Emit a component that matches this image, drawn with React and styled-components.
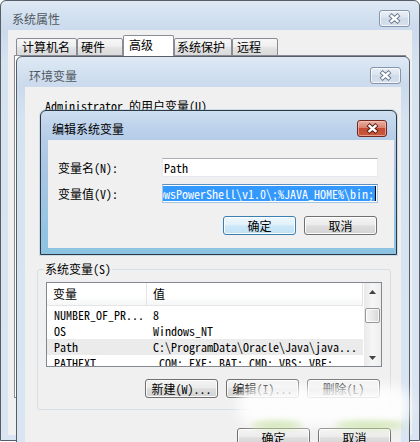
import React from 'react';
import styled, { createGlobalStyle } from 'styled-components';

const CJK = `"Noto Sans CJK SC", "Noto Sans", sans-serif`;
const MONO = `"Noto Sans Mono CJK SC", "Liberation Mono", "Noto Sans CJK SC", monospace`;

const GlobalStyle = createGlobalStyle`
  html, body { margin: 0; padding: 0; width: 420px; height: 442px; overflow: hidden; background: #fff; }
  body { font-family: ${CJK}; font-size: 12px; color: #000; }
  *, *::before, *::after { box-sizing: border-box; }
`;

const Desktop = styled.div`
  position: relative;
  width: 420px;
  height: 442px;
  overflow: hidden;
`;

/* ---------- generic window chrome ---------- */
const Frame = styled.div`
  display: flex;
  flex-direction: column;
  border: 1px solid ${p => (p.$active ? '#30363c' : '#565d66')};
  border-radius: 6px 6px 0 0;
  background: ${p =>
    p.$active
      ? 'linear-gradient(#cddff1 0px, #bfd4ec 14px, #b5cce7 29px, #a9c6e4 60px, #8cc3e2 100%)'
      : 'linear-gradient(#dfe9f5 0px, #d3e1f0 14px, #cbdaec 29px, #d5e2f0 60px, #d9e5f2 100%)'};
`;

const TitleBar = styled.div`
  display: flex;
  align-items: flex-start;
  justify-content: space-between;
  height: ${p => p.$h}px;
  flex: none;
`;

const Title = styled.div`
  padding-top: ${p => p.$top}px;
  padding-left: ${p => p.$left}px;
  font-family: ${CJK};
  font-size: 12px;
  line-height: 14px;
  color: ${p => (p.$active ? '#000' : '#505860')};
`;

const CloseButton = styled.div`
  display: flex;
  align-items: center;
  justify-content: center;
  width: ${p => p.$w || 31}px;
  height: 17px;
  margin-top: ${p => p.$top}px;
  margin-right: ${p => p.$right}px;
  border-radius: 3px;
  border: 1px solid ${p => (p.$active ? '#6e2a20' : '#8695a9')};
  background: ${p =>
    p.$active
      ? 'linear-gradient(#eab1a5 0%, #d9826f 45%, #c54a34 50%, #c65a3c 100%)'
      : 'linear-gradient(#e9eff7 0%, #dbe4ef 45%, #d0dbe8 50%, #d6e0ec 100%)'};
  box-shadow: inset 0 0 0 1px ${p => (p.$active ? 'rgba(255,200,190,0.6)' : 'rgba(255,255,255,0.7)')};
`;

const XIcon = ({ active }) => (
  <svg width="13" height="11" viewBox="0 0 13 11">
    <path
      d="M2 1.6 L11 9.4 M11 1.6 L2 9.4"
      stroke={active ? '#5b1d14' : '#6c7b90'}
      strokeWidth="4.4"
      fill="none"
    />
    <path d="M2.6 2.1 L10.4 8.9 M10.4 2.1 L2.6 8.9" stroke="#fff" strokeWidth="2.4" fill="none" />
  </svg>
);

/* ---------- outer window: 系统属性 ---------- */
const OuterWindow = styled(Frame)`
  width: 420px;
  height: 441px;
  padding: 0 7px 5px 7px;
`;

const OuterClient = styled.div`
  flex: 1;
  display: flex;
  flex-direction: column;
  background: #f0f0f0;
  padding: 6px 6px 0 6px;
`;

const TabStrip = styled.div`
  display: flex;
  align-items: flex-end;
  height: 20px;
  margin-left: 2px;
  position: relative;
  z-index: 1;
  margin-bottom: -1px;
`;

const Tab = styled.div`
  width: ${p => p.$w}px;
  height: ${p => (p.$selected ? 21 : 18)}px;
  padding-left: ${p => p.$pl}px;
  padding-top: ${p => (p.$selected ? 2 : 1)}px;
  border: 1px solid #898c95;
  border-bottom: ${p => (p.$selected ? 'none' : '1px solid #898c95')};
  border-radius: 2px 2px 0 0;
  background: ${p =>
    p.$selected ? '#fff' : 'linear-gradient(#f7f7f7 0%, #efefef 45%, #e3e3e3 55%, #dadada 100%)'};
  font-family: ${CJK};
  font-size: 12px;
  line-height: 14px;
  color: #000;
  white-space: nowrap;
`;

const TabPage = styled.div`
  height: 343px;
  border: 1px solid #898c95;
  background: #fff;
`;

/* ---------- env window: 环境变量 ---------- */
const EnvWindow = styled(Frame)`
  position: absolute;
  left: 16px;
  top: 56px;
  width: 394px;
  height: 420px;
  padding: 0 8px;
`;

const EnvClient = styled.div`
  flex: 1;
  display: flex;
  flex-direction: column;
  background: #f0f0f0;
  padding-top: 12px;
`;

const Label = styled.div`
  font-family: ${MONO};
  font-size: 12px;
  line-height: 14px;
  margin-left: ${p => p.$ml || 0}px;
  white-space: nowrap;
`;

const UserSection = styled.div`
  height: 149px;
  display: flex;
  flex-direction: column;
  padding: 6px 19px 0 21px;
  overflow: hidden;
`;

const GroupBox = styled.fieldset`
  margin: 0 10px 0 12px;
  padding: 6px 8px 11px 8px;
  border: 1px solid #d5dfe5;
  border-radius: 3px;
  min-width: 0;
  display: flex;
  flex-direction: column;
`;

const GroupLegend = styled.legend`
  padding: 0 1px;
  margin-left: -2px;
  font-family: ${MONO};
  font-size: 12px;
  line-height: 14px;
  color: #000;
`;

const ListBox = styled.div`
  display: flex;
  height: ${p => p.$h}px;
  border: 1px solid #828790;
  background: #fff;
  overflow: hidden;
`;

const ListMain = styled.div`
  flex: 1;
  display: flex;
  flex-direction: column;
  min-width: 0;
  padding-right: 1px;
`;

const ListHeader = styled.div`
  display: grid;
  grid-template-columns: 100px 1fr;
  height: 23px;
  flex: none;
  border-bottom: 1px solid #e5e5e5;
  background: linear-gradient(#ffffff 0%, #ffffff 60%, #f5f6f7 100%);
`;

const HeaderCell = styled.div`
  padding-left: 6px;
  padding-top: 4px;
  font-family: ${CJK};
  font-size: 12px;
  line-height: 14px;
  border-right: 1px solid #e3e4e6;
`;

const ListBody = styled.div`
  padding-top: 1px;
  display: flex;
  flex-direction: column;
`;

const Row = styled.div`
  display: grid;
  grid-template-columns: 100px 1fr;
  height: 16px;
  flex: none;
  background: ${p => (p.$selected ? '#ebebeb' : 'transparent')};
`;

const Cell = styled.div`
  padding-left: ${p => p.$pl || 7}px;
  font-family: ${MONO};
  font-size: 12px;
  line-height: 16px;
  white-space: nowrap;
  overflow: hidden;
`;

const ScrollBar = styled.div`
  width: 17px;
  flex: none;
  display: flex;
  flex-direction: column;
  background: linear-gradient(90deg, #e9e9e9, #f6f6f6 50%, #eeeeee);
`;

const ScrollArrow = styled.div`
  height: 17px;
  flex: none;
  display: flex;
  align-items: center;
  justify-content: center;
`;

const ScrollTrack = styled.div`
  flex: 1;
  padding: 8px 1px 0 1px;
`;

const Thumb = styled.div`
  height: 15px;
  border: 1px solid #979797;
  border-radius: 2px;
  background: linear-gradient(90deg, #f5f5f5, #e8e8e8 50%, #d6d6d6);
  box-shadow: inset 0 0 0 1px rgba(255, 255, 255, 0.8);
`;

const Arrow = ({ down }) => (
  <svg width="7" height="4" viewBox="0 0 7 4">
    <path d={down ? 'M0 0 H7 L3.5 4 Z' : 'M0 4 H7 L3.5 0 Z'} fill="#444" />
  </svg>
);

const ButtonRow = styled.div`
  display: flex;
  justify-content: flex-end;
  gap: 8px;
  margin-top: ${p => p.$mt || 0}px;
  padding-right: ${p => p.$pr || 0}px;
`;

const Button = styled.div`
  display: flex;
  align-items: center;
  justify-content: center;
  width: 73px;
  height: 19px;
  border: 1px solid ${p => (p.$default ? '#3c7fb1' : '#707070')};
  border-radius: 3px;
  background: ${p =>
    p.$default
      ? 'linear-gradient(#eef7fd 0%, #e1f1fb 45%, #cde9f8 52%, #bfe1f5 100%)'
      : 'linear-gradient(#f4f4f4 0%, #ececec 45%, #dedede 52%, #d3d3d3 100%)'};
  box-shadow: inset 0 0 0 1px rgba(255, 255, 255, 0.85);
  font-family: ${MONO};
  font-size: 12px;
  line-height: 14px;
  color: #000;
  white-space: nowrap;
`;

/* ---------- edit dialog: 编辑系统变量 ---------- */
const EditDialog = styled(Frame)`
  position: absolute;
  left: 40px;
  top: 110px;
  width: 357px;
  height: 145px;
  padding: 0 2px 6px 7px;
  box-shadow: 0 0 0 1px rgba(120, 190, 225, 0.35);
`;

const EditClient = styled.div`
  flex: 1;
  background: #f0f0f0;
  padding: 18px 16px 0 10px;
  display: flex;
  flex-direction: column;
`;

const FormGrid = styled.div`
  display: grid;
  grid-template-columns: 104px 1fr;
  row-gap: 7px;
  align-items: center;
`;

const TextField = styled.div`
  height: 19px;
  display: flex;
  align-items: center;
  justify-content: ${p => (p.$end ? 'flex-end' : 'flex-start')};
  padding: 0 1px;
  overflow: hidden;
  background: #fff;
  border: 1px solid ${p => (p.$focus ? '#a5c6e2' : '#e3e9ef')};
  border-top-color: ${p => (p.$focus ? '#5a8fbf' : '#abadb3')};
  font-family: ${MONO};
  font-size: 12px;
  line-height: 15px;
  white-space: nowrap;
`;

const Selected = styled.span`
  background: #3399ff;
  color: #fff;
  padding: 0 1px 0 0;
  border-right: 1px solid #000;
`;

/* faded white watermark lying over the lower right corner */
const Watermark = styled.div`
  position: absolute;
  left: 238px;
  top: 386px;
  width: 172px;
  height: 40px;
  pointer-events: none;
  border-radius: 18px;
  background: rgba(255, 255, 255, 0.86);
  filter: blur(6px);
`;

const GreenGlow = styled.div`
  position: absolute;
  left: ${p => p.$x}px;
  top: 421px;
  width: ${p => p.$w}px;
  height: 8px;
  pointer-events: none;
  border-radius: 50%;
  background: rgba(165, 210, 100, 0.45);
  filter: blur(3px);
`;

const tabs = [
  { label: '计算机名', w: 61, pl: 5 },
  { label: '硬件', w: 46, pl: 3 },
  { label: '高级', w: 51, pl: 5, selected: true },
  { label: '系统保护', w: 58, pl: 2 },
  { label: '远程', w: 46, pl: 4 },
];

const sysRows = [
  { name: 'NUMBER_OF_PR...', value: '8' },
  { name: 'OS', value: 'Windows_NT' },
  { name: 'Path', value: 'C:\\ProgramData\\Oracle\\Java\\java...', selected: true },
  { name: 'PATHEXT', value: '.COM;.EXE;.BAT;.CMD;.VBS;.VBE;' },
];

const userRows = [
  { name: 'TEMP', value: '%USERPROFILE%\\AppData\\Local\\Temp' },
  { name: 'TMP', value: '%USERPROFILE%\\AppData\\Local\\Temp' },
];

function VarList({ rows, height }) {
  return (
    <ListBox $h={height}>
      <ListMain>
        <ListHeader>
          <HeaderCell>变量</HeaderCell>
          <HeaderCell>值</HeaderCell>
        </ListHeader>
        <ListBody>
          {rows.map(r => (
            <Row key={r.name} $selected={r.selected}>
              <Cell>{r.name}</Cell>
              <Cell $pl={6}>{r.value}</Cell>
            </Row>
          ))}
        </ListBody>
      </ListMain>
      <ScrollBar>
        <ScrollArrow>
          <Arrow />
        </ScrollArrow>
        <ScrollTrack>
          <Thumb />
        </ScrollTrack>
        <ScrollArrow>
          <Arrow down />
        </ScrollArrow>
      </ScrollBar>
    </ListBox>
  );
}

export default function App() {
  return (
    <>
      <GlobalStyle />
      <Desktop>
        <OuterWindow>
          <TitleBar $h={29}>
            <Title $top={11} $left={4}>系统属性</Title>
            <CloseButton $top={9} $right={2}>
              <XIcon />
            </CloseButton>
          </TitleBar>
          <OuterClient>
            <TabStrip>
              {tabs.map(t => (
                <Tab key={t.label} $w={t.w} $pl={t.pl} $selected={t.selected}>
                  {t.label}
                </Tab>
              ))}
            </TabStrip>
            <TabPage />
          </OuterClient>
        </OuterWindow>

        <EnvWindow>
          <TitleBar $h={30}>
            <Title $top={12} $left={4}>环境变量</Title>
            <CloseButton $top={10} $right={0}>
              <XIcon />
            </CloseButton>
          </TitleBar>
          <EnvClient>
            <Label $ml={20}>Administrator 的用户变量(U)</Label>
            <UserSection>
              <VarList rows={userRows} height={96} />
              <ButtonRow $mt={12}>
                <Button>新建(N)...</Button>
                <Button>编辑(E)...</Button>
                <Button>删除(D)</Button>
              </ButtonRow>
            </UserSection>
            <GroupBox>
              <GroupLegend>系统变量(S)</GroupLegend>
              <VarList rows={sysRows} height={85} />
              <ButtonRow $mt={12} $pr={2}>
                <Button>新建(W)...</Button>
                <Button>编辑(I)...</Button>
                <Button>删除(L)</Button>
              </ButtonRow>
            </GroupBox>
            <ButtonRow $mt={18} $pr={10}>
              <Button>确定</Button>
              <Button>取消</Button>
            </ButtonRow>
          </EnvClient>
        </EnvWindow>

        <EditDialog $active>
          <TitleBar $h={29}>
            <Title $active $top={11} $left={4}>编辑系统变量</Title>
            <CloseButton $active $w={30} $top={9} $right={7}>
              <XIcon active />
            </CloseButton>
          </TitleBar>
          <EditClient>
            <FormGrid>
              <Label>变量名(N):</Label>
              <TextField>Path</TextField>
              <Label>变量值(V):</Label>
              <TextField $focus $end>
                <Selected>C:\Windows\System32\WindowsPowerShell\v1.0\;%JAVA_HOME%\bin;</Selected>
              </TextField>
            </FormGrid>
            <ButtonRow $mt={13} $pr={1}>
              <Button $default>确定</Button>
              <Button>取消</Button>
            </ButtonRow>
          </EditClient>
        </EditDialog>

        <Watermark />
        <GreenGlow $x={252} $w={50} />
        <GreenGlow $x={335} $w={70} />
      </Desktop>
    </>
  );
}
